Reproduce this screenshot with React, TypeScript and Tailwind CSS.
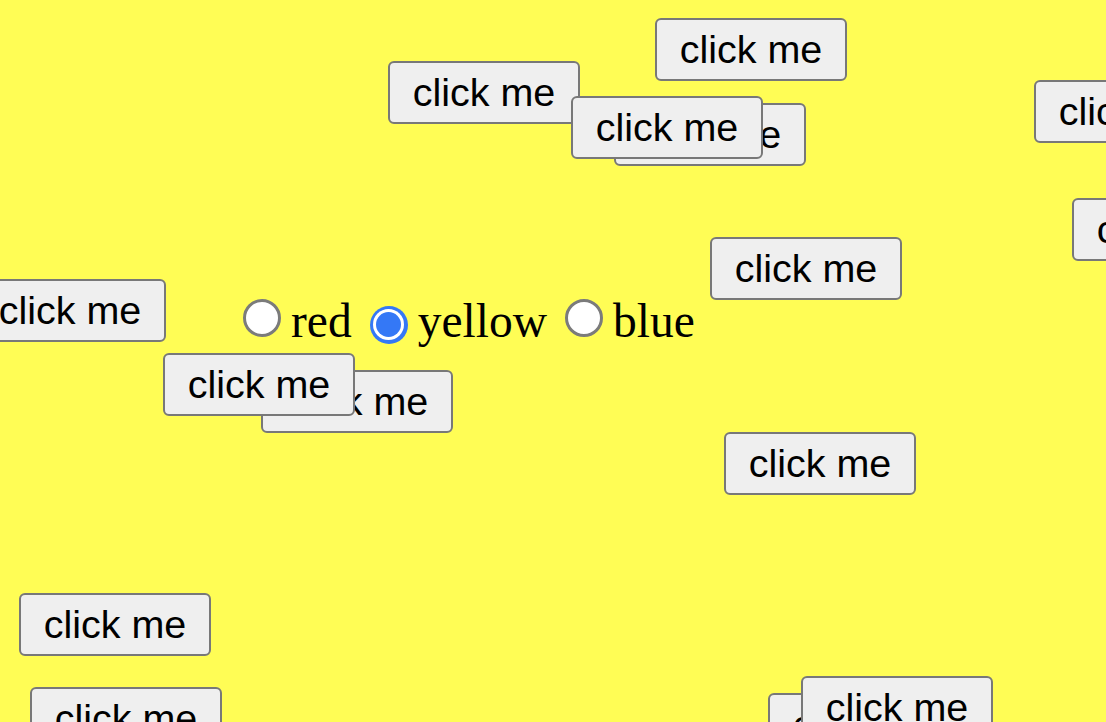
import React from 'react'

// each entry is one scattered button; later entries paint on top
const buttons = [
  'left-[655px] top-[18px]',
  'left-[388px] top-[61px]',
  'left-[614px] top-[103px]',
  'left-[571px] top-[96px]',
  'left-[1034px] top-[80px]',
  'left-[1072px] top-[198px]',
  'left-[710px] top-[237px]',
  'left-[-26px] top-[279px]',
  'left-[261px] top-[370px]',
  'left-[163px] top-[353px]',
  'left-[724px] top-[432px]',
  'left-[19px] top-[593px]',
  'left-[30px] top-[687px]',
  'left-[768px] top-[693px]',
  'left-[801px] top-[676px]',
]

const Radio = ({ checked, className = '' }: { checked?: boolean; className?: string }) =>
  checked ? (
    <span className={`size-[38px] rounded-full bg-[#3478f6] flex items-center justify-center shrink-0 ${className}`}>
      <span className="size-[31px] rounded-full bg-white flex items-center justify-center">
        <span className="size-[25px] rounded-full bg-[#3478f6]" />
      </span>
    </span>
  ) : (
    <span className={`size-[38px] rounded-full bg-white border-[3px] border-[#7b7b7b] shrink-0 ${className}`} />
  )

const Option = ({ label, checked, first }: { label: string; checked?: boolean; first?: boolean }) => (
  <label className={`flex items-baseline ${first ? 'ml-[243px]' : 'ml-[18px]'}`}>
    <Radio checked={checked} className="mr-[10px]" />
    <span>{label}</span>
  </label>
)

export default function App() {
  return (
    <div className="relative w-screen h-screen overflow-hidden bg-[#fffd55]">
      <div className="pt-[294px] flex items-baseline text-[47.5px] leading-[1.15] text-black font-['Liberation_Serif',serif]">
        <Option label="red" first />
        <Option label="yellow" checked />
        <Option label="blue" />
      </div>
      {buttons.map((pos, i) => (
        <button
          key={i}
          className={`absolute ${pos} w-[192px] h-[63px] flex items-center justify-center bg-[#efefef] border-[2.5px] border-[#787878] rounded-[6px] text-[39.5px] leading-[1.15] text-black font-['Liberation_Sans',Arial,sans-serif] whitespace-nowrap`}
        >
          click me
        </button>
      ))}
    </div>
  )
}
